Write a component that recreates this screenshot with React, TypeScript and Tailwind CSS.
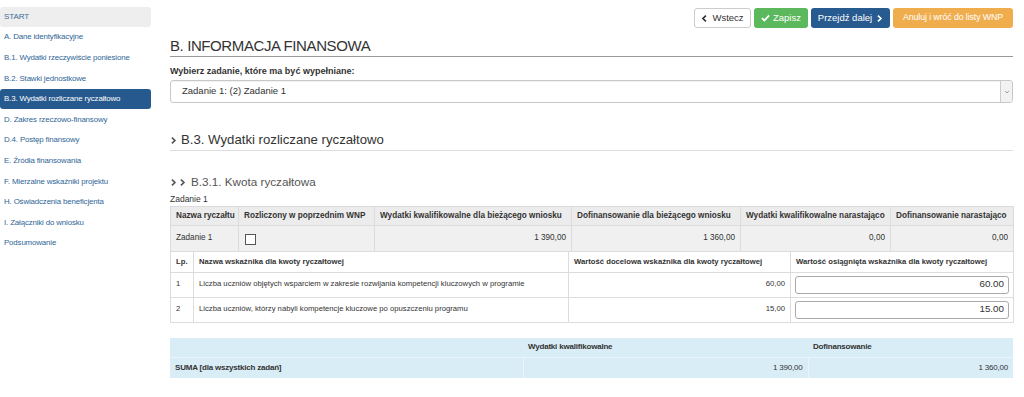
import React from 'react';

const menu = [
  'A. Dane identyfikacyjne',
  'B.1. Wydatki rzeczywiście poniesione',
  'B.2. Stawki jednostkowe',
  'B.3. Wydatki rozliczane ryczałtowo',
  'D. Zakres rzeczowo-finansowy',
  'D.4. Postęp finansowy',
  'E. Źródła finansowania',
  'F. Mierzalne wskaźniki projektu',
  'H. Oświadczenia beneficjenta',
  'I. Załączniki do wniosku',
  'Podsumowanie',
];

function Chevron({ className = '' }: { className?: string }) {
  return (
    <svg viewBox="0 0 8 8" className={className} width="7" height="7">
      <path d="M2.2 0.8 L5.6 4 L2.2 7.2" fill="none" stroke="currentColor" strokeWidth="1.9" />
    </svg>
  );
}

const indicators = [
  { lp: '1', name: 'Liczba uczniów objętych wsparciem w zakresie rozwijania kompetencji kluczowych w programie', target: '60,00', value: '60.00' },
  { lp: '2', name: 'Liczba uczniów, którzy nabyli kompetencje kluczowe po opuszczeniu programu', target: '15,00', value: '15.00' },
];

export default function App() {
  return (
    <div className="w-[1024px] h-[397px] overflow-hidden bg-white flex text-[#333] font-['Liberation_Sans',Arial,sans-serif]">
      {/* sidebar */}
      <div className="w-[151px] shrink-0 pt-[7px]">
        <div className="h-[20px] flex items-center px-[4px] bg-[#eeeeee] rounded-[3px] text-[8px] tracking-[-0.1px] text-[#3c6d9c]">START</div>
        {menu.map((m, i) => (
          <div
            key={m}
            className={
              i === 3
                ? 'h-[20.6px] flex items-center px-[4px] bg-[#26598d] rounded-[3px] text-[7.9px] tracking-[-0.15px] whitespace-nowrap text-white'
                : 'h-[20.6px] flex items-center px-[4px] text-[7.9px] tracking-[-0.15px] whitespace-nowrap text-[#2f6697]'
            }
          >
            {m}
          </div>
        ))}
      </div>

      {/* main */}
      <div className="ml-[19px] w-[843px] shrink-0">
        <div className="flex justify-end gap-[3px] pt-[8px] h-[28px]">
          <div className="w-[57px] h-[20px] border border-[#cccccc] rounded-[3px] bg-white flex items-center justify-center gap-[4px] text-[9.5px] text-[#333]">
            <svg viewBox="0 0 8 8" width="7" height="7"><path d="M5.6 0.8 L2.2 4 L5.6 7.2" fill="none" stroke="currentColor" strokeWidth="1.9" /></svg>
            Wstecz
          </div>
          <div className="w-[54px] h-[20px] rounded-[3px] bg-[#5cb85c] flex items-center justify-center gap-[3px] text-[9.5px] text-white">
            <svg viewBox="0 0 10 8" width="9" height="8"><path d="M1 4.2 L3.8 6.8 L9 1.2" fill="none" stroke="currentColor" strokeWidth="2" /></svg>
            Zapisz
          </div>
          <div className="w-[79px] h-[20px] rounded-[3px] bg-[#275a8e] flex items-center justify-center gap-[4px] text-[9.5px] text-white">
            Przejdź dalej
            <Chevron />
          </div>
          <div className="w-[120px] h-[20px] rounded-[3px] bg-[#f0ad4e] flex items-center justify-center text-[8.8px] tracking-[-0.1px] whitespace-nowrap text-white">
            Anuluj i wróć do listy WNP
          </div>
        </div>

        <div className="mt-[9px] h-[20px] border-b border-[#999] text-[15px] tracking-[-0.4px] leading-[17px] text-[#333]">B. INFORMACJA FINANSOWA</div>

        <div className="mt-[9px] text-[9px] font-bold leading-[11px]">Wybierz zadanie, które ma być wypełniane:</div>
        <div className="mt-[3px] h-[23px] border border-[#c8c8c8] rounded-[3px] flex items-center justify-between pl-[11px] shadow-[inset_0_1px_1px_rgba(0,0,0,0.06)]">
          <span className="text-[9.5px]">Zadanie 1: (2) Zadanie 1</span>
          <div className="w-[12px] h-full border-l border-[#ccc] bg-[#f2f2f2] flex items-center justify-center rounded-r-[3px]">
            <svg viewBox="0 0 8 8" width="6" height="6"><path d="M1.5 2.8 L4 5.2 L6.5 2.8" fill="none" stroke="#777" strokeWidth="1" /></svg>
          </div>
        </div>

        <div className="mt-[29px] h-[19px] border-b border-[#ddd] flex items-center gap-[4px] pb-[2px] text-[13.2px] text-[#333]">
          <Chevron className="text-[#555]" />
          B.3. Wydatki rozliczane ryczałtowo
        </div>

        <div className="mt-[24px] flex items-center gap-[3px] text-[11.7px] text-[#555] h-[14px]">
          <Chevron />
          <Chevron className="-ml-[1px]" />
          <span className="ml-[2px]">B.3.1. Kwota ryczałtowa</span>
        </div>

        <div className="mt-[5px] text-[8.5px] leading-[11px]">Zadanie 1</div>

        <table className="mt-[1px] w-[843px] table-fixed border-collapse text-[8.2px]">
          <colgroup>
            <col className="w-[68px]" />
            <col className="w-[136px]" />
            <col className="w-[197px]" />
            <col className="w-[169px]" />
            <col className="w-[150px]" />
            <col className="w-[123px]" />
          </colgroup>
          <tbody>
            <tr className="h-[19px] bg-[#ececec] font-bold">
              {['Nazwa ryczałtu', 'Rozliczony w poprzednim WNP', 'Wydatki kwalifikowalne dla bieżącego wniosku', 'Dofinansowanie dla bieżącego wniosku', 'Wydatki kwalifikowalne narastająco', 'Dofinansowanie narastająco'].map((h) => (
                <td key={h} className="border border-[#dcdcdc] px-[5px] whitespace-nowrap">{h}</td>
              ))}
            </tr>
            <tr className="h-[26px] bg-[#f0f0f0]">
              <td className="border border-[#dcdcdc] px-[5px]">Zadanie 1</td>
              <td className="border border-[#dcdcdc] px-[6px]">
                <div className="w-[11px] h-[11px] border border-[#555] bg-white mt-[2px]" />
              </td>
              <td className="border border-[#dcdcdc] px-[5px] text-right">1 390,00</td>
              <td className="border border-[#dcdcdc] px-[5px] text-right">1 360,00</td>
              <td className="border border-[#dcdcdc] px-[5px] text-right">0,00</td>
              <td className="border border-[#dcdcdc] px-[5px] text-right">0,00</td>
            </tr>
          </tbody>
        </table>

        <table className="w-[843px] table-fixed border-collapse text-[7.7px]">
          <colgroup>
            <col className="w-[23px]" />
            <col className="w-[375px]" />
            <col className="w-[222px]" />
            <col className="w-[223px]" />
          </colgroup>
          <tbody>
            <tr className="h-[20px] font-bold">
              <td className="border border-[#dcdcdc] border-t-0 px-[5px]">Lp.</td>
              <td className="border border-[#dcdcdc] border-t-0 px-[5px]">Nazwa wskaźnika dla kwoty ryczałtowej</td>
              <td className="border border-[#dcdcdc] border-t-0 px-[5px]">Wartość docelowa wskaźnika dla kwoty ryczałtowej</td>
              <td className="border border-[#dcdcdc] border-t-0 px-[5px]">Wartość osiągnięta wskaźnika dla kwoty ryczałtowej</td>
            </tr>
            {indicators.map((r) => (
              <tr key={r.lp} className="h-[25px]">
                <td className="border border-[#dcdcdc] px-[5px] align-top pt-[5px]">{r.lp}</td>
                <td className="border border-[#dcdcdc] px-[5px] align-top pt-[5px]">{r.name}</td>
                <td className="border border-[#dcdcdc] px-[5px] align-top pt-[5px] text-right">{r.target}</td>
                <td className="border border-[#dcdcdc] px-[4px] align-top pt-[3px]">
                  <div className="h-[18px] border border-[#aaa] rounded-[3px] flex items-center justify-end pr-[4px] text-[9.8px] text-[#333]">{r.value}</div>
                </td>
              </tr>
            ))}
          </tbody>
        </table>

        <table className="mt-[15px] w-[843px] table-fixed border-collapse text-[8px] tracking-[-0.2px] bg-[#d9edf7]">
          <colgroup>
            <col className="w-[353px]" />
            <col className="w-[285px]" />
            <col className="w-[205px]" />
          </colgroup>
          <tbody>
            <tr className="h-[20px] font-bold">
              <td className="border-b border-[#eaf4fa] px-[5px]"></td>
              <td className="border-b border-[#eaf4fa] px-[5px]">Wydatki kwalifikowalne</td>
              <td className="border-b border-[#eaf4fa] px-[5px]">Dofinansowanie</td>
            </tr>
            <tr className="h-[20px]">
              <td className="px-[5px] font-bold">SUMA [dla wszystkich zadań]</td>
              <td className="border-l border-[#eaf4fa] px-[5px] text-right">1 390,00</td>
              <td className="border-l border-[#eaf4fa] px-[5px] text-right">1 360,00</td>
            </tr>
          </tbody>
        </table>
      </div>
    </div>
  );
}
